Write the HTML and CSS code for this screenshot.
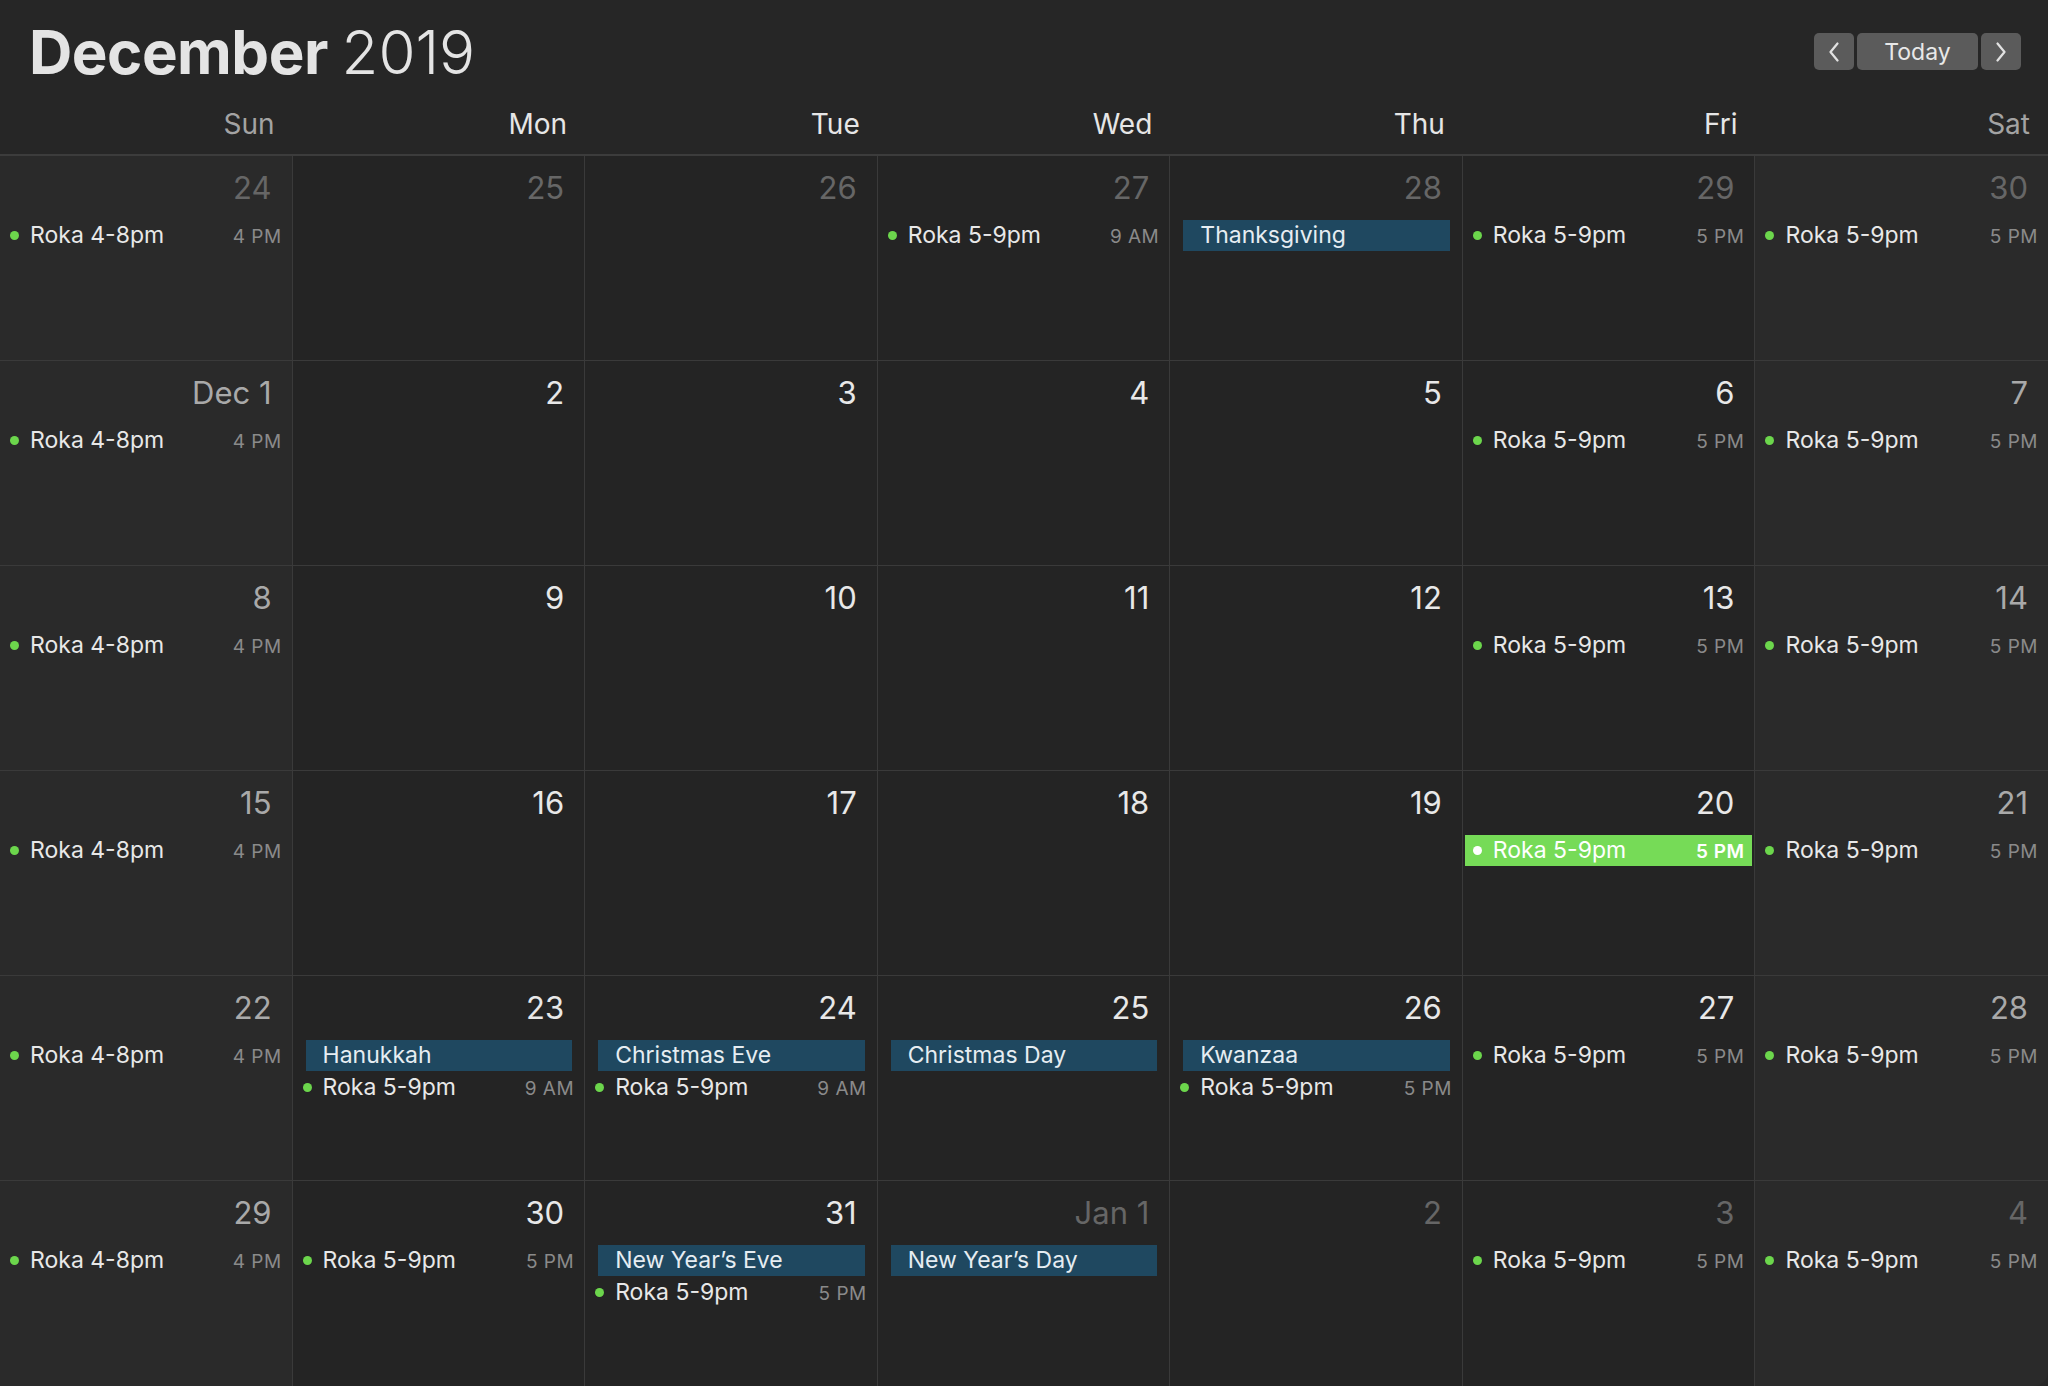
FILE: index.html
```html
<!DOCTYPE html>
<html lang="en">
<head>
    <meta charset="UTF-8">
    <title>December 2019</title>
    <link rel="stylesheet" href="styles.css">
</head>
<body>
    <div class="calendar">
        <div class="topbar">
            <h1 class="title">December <span>2019</span></h1>
            <div class="nav">
                <button class="nav-btn arrow" aria-label="Previous">
                    <svg width="10" height="20" viewBox="0 0 10 20"><polyline points="8.5,1.5 1.5,10 8.5,18.5"/></svg>
                </button>
                <button class="nav-btn today">Today</button>
                <button class="nav-btn arrow" aria-label="Next">
                    <svg width="10" height="20" viewBox="0 0 10 20"><polyline points="1.5,1.5 8.5,10 1.5,18.5"/></svg>
                </button>
            </div>
        </div>

        <div class="weekdays">
            <div class="wk weekend">Sun</div>
            <div class="wk">Mon</div>
            <div class="wk">Tue</div>
            <div class="wk">Wed</div>
            <div class="wk">Thu</div>
            <div class="wk">Fri</div>
            <div class="wk weekend">Sat</div>
        </div>

        <div class="grid">
            <!-- week 1 -->
            <div class="day weekend other">
                <div class="num">24</div>
                <div class="events">
                    <div class="event"><span class="name">Roka 4-8pm</span><span class="time">4 PM</span></div>
                </div>
            </div>
            <div class="day other"><div class="num">25</div></div>
            <div class="day other"><div class="num">26</div></div>
            <div class="day other">
                <div class="num">27</div>
                <div class="events">
                    <div class="event"><span class="name">Roka 5-9pm</span><span class="time">9 AM</span></div>
                </div>
            </div>
            <div class="day other">
                <div class="num">28</div>
                <div class="events">
                    <div class="holiday">Thanksgiving</div>
                </div>
            </div>
            <div class="day other">
                <div class="num">29</div>
                <div class="events">
                    <div class="event"><span class="name">Roka 5-9pm</span><span class="time">5 PM</span></div>
                </div>
            </div>
            <div class="day weekend other last">
                <div class="num">30</div>
                <div class="events">
                    <div class="event"><span class="name">Roka 5-9pm</span><span class="time">5 PM</span></div>
                </div>
            </div>

            <!-- week 2 -->
            <div class="day weekend">
                <div class="num">Dec 1</div>
                <div class="events">
                    <div class="event"><span class="name">Roka 4-8pm</span><span class="time">4 PM</span></div>
                </div>
            </div>
            <div class="day"><div class="num">2</div></div>
            <div class="day"><div class="num">3</div></div>
            <div class="day"><div class="num">4</div></div>
            <div class="day"><div class="num">5</div></div>
            <div class="day">
                <div class="num">6</div>
                <div class="events">
                    <div class="event"><span class="name">Roka 5-9pm</span><span class="time">5 PM</span></div>
                </div>
            </div>
            <div class="day weekend last">
                <div class="num">7</div>
                <div class="events">
                    <div class="event"><span class="name">Roka 5-9pm</span><span class="time">5 PM</span></div>
                </div>
            </div>

            <!-- week 3 -->
            <div class="day weekend">
                <div class="num">8</div>
                <div class="events">
                    <div class="event"><span class="name">Roka 4-8pm</span><span class="time">4 PM</span></div>
                </div>
            </div>
            <div class="day"><div class="num">9</div></div>
            <div class="day"><div class="num">10</div></div>
            <div class="day"><div class="num">11</div></div>
            <div class="day"><div class="num">12</div></div>
            <div class="day">
                <div class="num">13</div>
                <div class="events">
                    <div class="event"><span class="name">Roka 5-9pm</span><span class="time">5 PM</span></div>
                </div>
            </div>
            <div class="day weekend last">
                <div class="num">14</div>
                <div class="events">
                    <div class="event"><span class="name">Roka 5-9pm</span><span class="time">5 PM</span></div>
                </div>
            </div>

            <!-- week 4 -->
            <div class="day weekend">
                <div class="num">15</div>
                <div class="events">
                    <div class="event"><span class="name">Roka 4-8pm</span><span class="time">4 PM</span></div>
                </div>
            </div>
            <div class="day"><div class="num">16</div></div>
            <div class="day"><div class="num">17</div></div>
            <div class="day"><div class="num">18</div></div>
            <div class="day"><div class="num">19</div></div>
            <div class="day">
                <div class="num">20</div>
                <div class="events">
                    <div class="event selected"><span class="name">Roka 5-9pm</span><span class="time">5 PM</span></div>
                </div>
            </div>
            <div class="day weekend last">
                <div class="num">21</div>
                <div class="events">
                    <div class="event"><span class="name">Roka 5-9pm</span><span class="time">5 PM</span></div>
                </div>
            </div>

            <!-- week 5 -->
            <div class="day weekend">
                <div class="num">22</div>
                <div class="events">
                    <div class="event"><span class="name">Roka 4-8pm</span><span class="time">4 PM</span></div>
                </div>
            </div>
            <div class="day">
                <div class="num">23</div>
                <div class="events">
                    <div class="holiday">Hanukkah</div>
                    <div class="event"><span class="name">Roka 5-9pm</span><span class="time">9 AM</span></div>
                </div>
            </div>
            <div class="day">
                <div class="num">24</div>
                <div class="events">
                    <div class="holiday">Christmas Eve</div>
                    <div class="event"><span class="name">Roka 5-9pm</span><span class="time">9 AM</span></div>
                </div>
            </div>
            <div class="day">
                <div class="num">25</div>
                <div class="events">
                    <div class="holiday">Christmas Day</div>
                </div>
            </div>
            <div class="day">
                <div class="num">26</div>
                <div class="events">
                    <div class="holiday">Kwanzaa</div>
                    <div class="event"><span class="name">Roka 5-9pm</span><span class="time">5 PM</span></div>
                </div>
            </div>
            <div class="day">
                <div class="num">27</div>
                <div class="events">
                    <div class="event"><span class="name">Roka 5-9pm</span><span class="time">5 PM</span></div>
                </div>
            </div>
            <div class="day weekend last">
                <div class="num">28</div>
                <div class="events">
                    <div class="event"><span class="name">Roka 5-9pm</span><span class="time">5 PM</span></div>
                </div>
            </div>

            <!-- week 6 -->
            <div class="day weekend bottom">
                <div class="num">29</div>
                <div class="events">
                    <div class="event"><span class="name">Roka 4-8pm</span><span class="time">4 PM</span></div>
                </div>
            </div>
            <div class="day bottom">
                <div class="num">30</div>
                <div class="events">
                    <div class="event"><span class="name">Roka 5-9pm</span><span class="time">5 PM</span></div>
                </div>
            </div>
            <div class="day bottom">
                <div class="num">31</div>
                <div class="events">
                    <div class="holiday">New Year’s Eve</div>
                    <div class="event"><span class="name">Roka 5-9pm</span><span class="time">5 PM</span></div>
                </div>
            </div>
            <div class="day other bottom">
                <div class="num">Jan 1</div>
                <div class="events">
                    <div class="holiday">New Year’s Day</div>
                </div>
            </div>
            <div class="day other bottom"><div class="num">2</div></div>
            <div class="day other bottom">
                <div class="num">3</div>
                <div class="events">
                    <div class="event"><span class="name">Roka 5-9pm</span><span class="time">5 PM</span></div>
                </div>
            </div>
            <div class="day weekend other bottom last">
                <div class="num">4</div>
                <div class="events">
                    <div class="event"><span class="name">Roka 5-9pm</span><span class="time">5 PM</span></div>
                </div>
            </div>
        </div>
    </div>
</body>
</html>
```

FILE: styles.css
```css
* {
    box-sizing: border-box;
}
body {
    margin: 0;
    padding: 0;
    overflow: hidden;
    background-color: #262626;
    color: #e6e6e6;
    font-family: Inter, "Noto Sans", sans-serif;
}
.calendar {
    display: flex;
    flex-direction: column;
    height: 100vh;
    border-bottom-right-radius: 14px;
    overflow: hidden;
}
.topbar {
    display: flex;
    justify-content: space-between;
    align-items: center;
    height: 103px;
    padding: 0 27px 0 29px;
    flex-shrink: 0;
}
.title {
    margin: 0;
    font-size: 60px;
    line-height: 60px;
    font-weight: 700;
    letter-spacing: -0.5px;
    color: #e4e4e4;
}
.title span {
    font-weight: 300;
    letter-spacing: 0;
}
.nav {
    display: flex;
    gap: 3px;
}
.nav-btn {
    height: 37px;
    border: none;
    border-radius: 5px;
    background-color: #5b5b5b;
    color: #e8e8e8;
    font-family: inherit;
    font-size: 23px;
    padding: 0;
    display: flex;
    align-items: center;
    justify-content: center;
    cursor: pointer;
}
.nav-btn.arrow {
    width: 40px;
}
.nav-btn.today {
    width: 121px;
}
.nav-btn svg polyline {
    fill: none;
    stroke: #e2e2e2;
    stroke-width: 2.2;
    stroke-linecap: round;
    stroke-linejoin: round;
}
.weekdays {
    display: grid;
    grid-template-columns: repeat(7, 1fr);
    height: 53px;
    border-bottom: 2px solid #3c3c3c;
    flex-shrink: 0;
}
.wk {
    text-align: right;
    padding: 7px 18px 0 0;
    font-size: 28px;
    line-height: 28px;
    color: #e6e6e6;
}
.wk.weekend {
    color: #a3a3a3;
}
.grid {
    flex: 1;
    display: grid;
    grid-template-columns: repeat(7, 1fr);
    grid-template-rows: repeat(6, 1fr);
    min-height: 0;
}
.day {
    background-color: #242424;
    border-right: 1px solid #3a3a3a;
    border-bottom: 1px solid #3a3a3a;
    padding-top: 12px;
    min-width: 0;
    overflow: hidden;
}
.day.weekend {
    background-color: #2a2a2a;
}
.day.last {
    border-right: none;
}
.day.bottom {
    border-bottom: none;
}
.num {
    height: 40px;
    line-height: 40px;
    font-size: 31px;
    text-align: right;
    padding-right: 20px;
    color: #e8e8e8;
}
.day.weekend .num {
    color: #a9a9a9;
}
.day.other .num {
    color: #666;
}
.events {
    display: flex;
    flex-direction: column;
    gap: 1px;
    margin-top: 12px;
    padding: 0 2px;
}
.event {
    display: flex;
    align-items: baseline;
    height: 31px;
    line-height: 31px;
    padding: 0 8px;
    font-size: 23px;
    color: #e8e8e8;
    white-space: nowrap;
}
.event::before {
    content: "";
    align-self: center;
    width: 9px;
    height: 9px;
    border-radius: 50%;
    background-color: #6cd64c;
    margin-right: 11px;
    flex-shrink: 0;
}
.event .time {
    margin-left: auto;
    font-size: 19px;
    color: #8a8a8a;
    letter-spacing: 0.5px;
}
.event.selected {
    background-color: #76db57;
    color: #fff;
}
.event.selected::before {
    background-color: #fff;
}
.event.selected .time {
    color: #fff;
    font-weight: 600;
}
.holiday {
    height: 31px;
    line-height: 31px;
    margin: 0 10px 0 11px;
    padding-left: 17px;
    background-color: #1f4860;
    color: #e6edf2;
    font-size: 23px;
    white-space: nowrap;
}
```
